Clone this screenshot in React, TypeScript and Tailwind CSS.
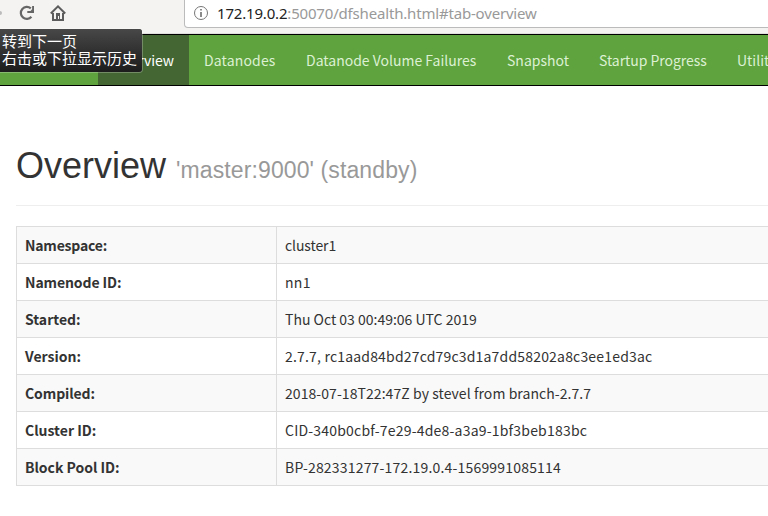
const rows = [
  { label: 'Namespace:', labelTracking: 'tracking-[-0.2px]', value: 'cluster1', tracking: 'tracking-[-0.1px]' },
  { label: 'Namenode ID:', labelTracking: 'tracking-[-0.1px]', value: 'nn1', tracking: 'tracking-[0.3px]' },
  { label: 'Started:', labelTracking: 'tracking-normal', value: 'Thu Oct 03 00:49:06 UTC 2019', tracking: 'tracking-normal' },
  { label: 'Version:', labelTracking: 'tracking-normal', value: '2.7.7, rc1aad84bd27cd79c3d1a7dd58202a8c3ee1ed3ac', tracking: 'tracking-[0.185px]' },
  { label: 'Compiled:', labelTracking: 'tracking-[-0.1px]', value: '2018-07-18T22:47Z by stevel from branch-2.7.7', tracking: 'tracking-[0.065px]' },
  { label: 'Cluster ID:', labelTracking: 'tracking-normal', value: 'CID-340b0cbf-7e29-4de8-a3a9-1bf3beb183bc', tracking: 'tracking-[0.2px]' },
  { label: 'Block Pool ID:', labelTracking: 'tracking-[-0.04px]', value: 'BP-282331277-172.19.0.4-1569991085114', tracking: 'tracking-[0.185px]' },
];

const tabs = [
  { label: 'Datanodes', style: 'w-[102px] tracking-[0.15px]' },
  { label: 'Datanode Volume Failures', style: 'w-[201px]' },
  { label: 'Snapshot', style: 'w-[92px]' },
  { label: 'Startup Progress', style: 'w-[138px] tracking-[-0.04px]' },
  { label: 'Utilities', style: 'w-[80px]' },
];

function Toolbar() {
  return (
    <div className="flex h-[34px] border-b border-[#e0dfdd] bg-[#f4f3f1]">
      <div className="flex w-[184px] shrink-0">
        <div className="mt-[11px] h-1 w-[2px] rounded-r bg-[#bbb]" />
        <svg className="mt-[5px] ml-[17px] h-4 w-4" viewBox="0 0 16 16" fill="none" stroke="#666" strokeWidth="2.2">
          <path d="M12.4 11.8A6 6 0 1 1 11.8 3.4" />
          <path d="M15 1v7H8.3V5.9h3.2l1.6-1.6V1z" fill="#666" stroke="none" />
        </svg>
        <svg className="mt-[5px] ml-[15px] h-4 w-4" viewBox="0 0 16 16" fill="none" stroke="#5c5c5c" strokeWidth="2">
          <path d="M.8 8.5 8 1.4l7.2 7.1" />
          <path d="M3 8V15h10V8" />
          <path d="M6 8h4v6H9v-3H8v3H6z" fill="#5c5c5c" stroke="none" />
        </svg>
      </div>
      <div className="flex h-[28px] w-[600px] shrink-0 items-center rounded-b border border-t-0 border-[#bbb] bg-white pl-2 font-['Noto_Sans',sans-serif] text-[15px] tracking-[-0.18px]">
        <svg className="mb-px h-4 w-4" viewBox="0 0 16 16" fill="none" stroke="#777">
          <circle cx="8" cy="8" r="6.5" />
          <path d="M8 7v5M8 4v1.6" strokeWidth="1.7" />
        </svg>
        <span className="ml-2 whitespace-nowrap text-[#222]">
          172.19.0.2<span className="text-[#999]">:50070/dfshealth.html#tab-overview</span>
        </span>
      </div>
    </div>
  );
}

export default function App() {
  return (
    <div className="relative h-[516px] w-[768px] overflow-hidden bg-white font-['Noto_Sans_CJK_SC',sans-serif] text-[#333]">
      <Toolbar />
      <nav className="flex h-[52px] border-y border-black bg-[#5fa33e] text-[14px] text-[#dcf0d3]">
        <div className="w-[98px] shrink-0" />
        <span className="flex w-[91px] shrink-0 items-center bg-[#446633] pl-[15px] tracking-[-0.05px] text-white">Overview</span>
        {tabs.map((tab) => (
          <span key={tab.label} className={`flex shrink-0 items-center pl-[15px] whitespace-nowrap ${tab.style}`}>
            {tab.label}
          </span>
        ))}
      </nav>
      <h1 className="mt-[53px] ml-4 h-[67px] w-[900px] border-b border-[#eee] font-['Liberation_Sans',sans-serif] text-[36px]">
        Overview <small className="text-[23px] tracking-[0.11px] text-[#999]">'master:9000' (standby)</small>
      </h1>
      <table className="mt-5 ml-4 w-[900px] table-fixed border-collapse text-[14px]">
        <tbody>
          {rows.map((row) => (
            <tr key={row.label} className="h-[37px] odd:bg-[#f9f9f9]">
              <th className={`w-[260px] border border-[#ddd] px-2 text-left ${row.labelTracking}`}>{row.label}</th>
              <td className={`border border-[#ddd] px-2 ${row.tracking}`}>{row.value}</td>
            </tr>
          ))}
        </tbody>
      </table>
      <div className="absolute top-[28px] left-[-6px] h-[45px] w-[149px] rounded border border-white/25 bg-[#2b2b2b] bg-linear-to-b from-[#484848] to-[#1c1c1c] bg-clip-padding pt-[3px] pl-[7px] text-[15px] leading-[17px] whitespace-nowrap text-white">
        <div>转到下一页</div>
        <div>右击或下拉显示历史</div>
      </div>
    </div>
  );
}
